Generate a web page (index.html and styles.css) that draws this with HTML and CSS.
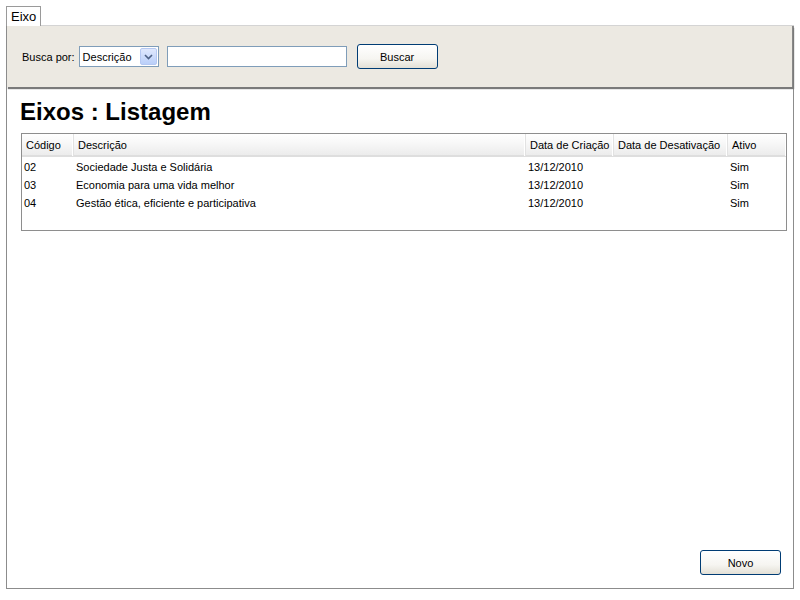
FILE: index.html
```html
<!DOCTYPE html>
<html lang="pt">
<head>
<meta charset="utf-8">
<title>Eixos</title>
<link rel="stylesheet" href="styles.css">
</head>
<body>
<div class="page">
  <div class="tabstrip">
    <div class="tab">Eixo</div>
  </div>
  <div class="panel">
    <div class="search">
      <span class="search-label">Busca por:</span>
      <div class="select">
        <span class="select-text">Descrição</span>
        <span class="select-arrow">
          <svg width="9" height="6" viewBox="0 0 9 6"><path d="M1 1 L4.5 4.5 L8 1" fill="none" stroke="#4d6185" stroke-width="1.6"/></svg>
        </span>
      </div>
      <div class="textbox"></div>
      <button class="btn btn-search">Buscar</button>
    </div>
    <div class="content">
      <h1 class="title">Eixos : Listagem</h1>
      <div class="grid">
        <div class="grid-head">
          <div class="hcell">Código</div>
          <div class="hcell">Descrição</div>
          <div class="hcell">Data de Criação</div>
          <div class="hcell">Data de Desativação</div>
          <div class="hcell last">Ativo</div>
        </div>
        <div class="grid-body">
          <div class="row">
            <div class="cell">02</div>
            <div class="cell">Sociedade Justa e Solidária</div>
            <div class="cell">13/12/2010</div>
            <div class="cell"></div>
            <div class="cell">Sim</div>
          </div>
          <div class="row">
            <div class="cell">03</div>
            <div class="cell">Economia para uma vida melhor</div>
            <div class="cell">13/12/2010</div>
            <div class="cell"></div>
            <div class="cell">Sim</div>
          </div>
          <div class="row">
            <div class="cell">04</div>
            <div class="cell">Gestão ética, eficiente e participativa</div>
            <div class="cell">13/12/2010</div>
            <div class="cell"></div>
            <div class="cell">Sim</div>
          </div>
        </div>
      </div>
    </div>
    <div class="footer">
      <button class="btn btn-new">Novo</button>
    </div>
  </div>
</div>
</body>
</html>
```

FILE: styles.css
```css
* { box-sizing: border-box; }
html, body { margin: 0; padding: 0; background: #fff; }
body {
  font-family: "Liberation Sans", Arial, sans-serif;
  font-size: 11px;
  color: #000;
}
.page {
  width: 800px;
  height: 600px;
  padding: 6px 6px 0 6px;
  display: flex;
  flex-direction: column;
}
.tabstrip {
  display: flex;
  border-bottom: 1px solid #d4d4d4;
  height: 20px;
}
.tab {
  border: 1px solid #9a9a9a;
  border-bottom: none;
  height: 20px;
  padding: 1px 4px 0 4px;
  font-size: 13px;
  line-height: 17px;
  background: #fff;
  margin-bottom: -1px;
}
.panel {
  height: 563px;
  border: 1px solid #8c8c8c;
  border-top: none;
  display: flex;
  flex-direction: column;
}
.search {
  height: 61px;
  background: #ece9e2;
  border-right: 1px solid #888;
  box-shadow: 1px 2px 1px #7a7a7a;
  display: flex;
  align-items: center;
  padding-left: 15px;
  margin-bottom: 3px;
}
.search-label { margin-right: 4px; }
.select {
  width: 80px;
  height: 21px;
  border: 1px solid #7f9db9;
  background: #fff;
  display: flex;
  align-items: center;
  justify-content: space-between;
  padding: 0 1px 0 3px;
  margin-right: 8px;
}
.select-arrow {
  width: 17px;
  height: 17px;
  background: linear-gradient(#dfe8fd, #bacff9);
  border: 1px solid #b5c8f2;
  border-radius: 2px;
  display: flex;
  align-items: center;
  justify-content: center;
}
.textbox {
  width: 180px;
  height: 21px;
  border: 1px solid #7f9db9;
  background: #fff;
  margin-right: 10px;
}
.btn {
  font-family: "Liberation Sans", Arial, sans-serif;
  font-size: 11px;
  color: #000;
  width: 81px;
  height: 25px;
  border: 1px solid #003c74;
  border-radius: 3px;
  background: linear-gradient(#ffffff 0%, #f6f5f1 60%, #e3e0d6 100%);
  padding: 0;
  margin: 0;
}
.content {
  flex: 1;
  padding: 0 6px 0 14px;
}
.title {
  font-size: 24px;
  font-weight: bold;
  margin: 9px 0 0 -1px;
  line-height: 26px;
}
.grid {
  margin-top: 8px;
  border: 1px solid #8e8e8e;
  height: 98px;
}
.grid-head, .row {
  display: grid;
  grid-template-columns: 52px 452px 88px 114px 1fr;
}
.grid-head {
  height: 23px;
  background: linear-gradient(#ffffff 0%, #f8f8f8 40%, #ececec 100%);
  border-bottom: 2px solid #dedede;
}
.hcell {
  padding-left: 4px;
  line-height: 22px;
  border-right: 1px solid #e2e2e2;
  box-shadow: inset -1px 0 0 #fff;
  white-space: nowrap;
}
.hcell.last { border-right: none; }
.grid-body { padding-top: 1px; }
.row { height: 18px; }
.cell {
  padding-left: 2px;
  line-height: 18px;
  white-space: nowrap;
}
.footer {
  display: flex;
  justify-content: flex-end;
  padding: 0 12px 13px 0;
}
```
